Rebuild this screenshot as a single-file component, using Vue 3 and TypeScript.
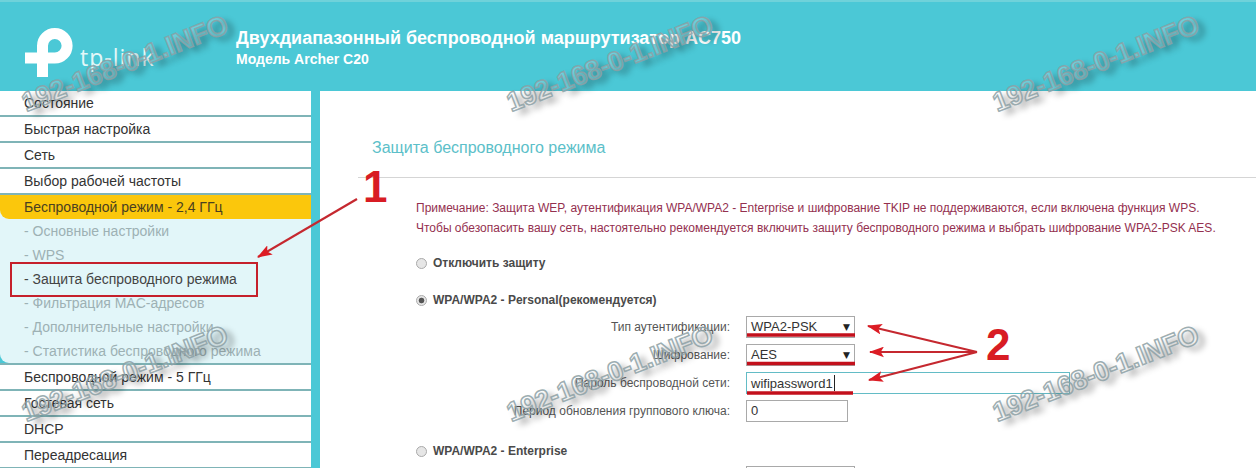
<script setup lang="ts">
interface MenuRow { label: string }
const topMenu: MenuRow[] = [
  { label: 'Состояние' },
  { label: 'Быстрая настройка' },
  { label: 'Сеть' },
  { label: 'Выбор рабочей частоты' },
]
const subMenu = [
  { label: '- Основные настройки', active: false },
  { label: '- WPS', active: false },
  { label: '- Защита беспроводного режима', active: true },
  { label: '- Фильтрация MAC-адресов', active: false },
  { label: '- Дополнительные настройки', active: false },
  { label: '- Статистика беспроводного режима', active: false },
]
const bottomMenu: MenuRow[] = [
  { label: 'Беспроводной режим - 5 ГГц' },
  { label: 'Гостевая сеть' },
  { label: 'DHCP' },
  { label: 'Переадресация' },
]
const marks = [
  { x: 125, y: 64 }, { x: 610, y: 64 }, { x: 1096, y: 64 },
  { x: 125, y: 374 }, { x: 610, y: 374 }, { x: 1096, y: 374 },
]
</script>

<template>
  <div class="page">
    <header class="header">
      <div class="logo">
        <svg width="56" height="56" viewBox="20 24 56 56">
          <path d="M42.5 77V45.75a12.3 12.3 0 1 1 12.3 12.3H25" fill="none" stroke="#fff" stroke-width="11" />
        </svg>
        <span class="logo-text">tp-link</span>
      </div>
      <div class="titles">
        <div class="title">Двухдиапазонный беспроводной маршрутизатор AC750</div>
        <div class="model">Модель Archer C20</div>
      </div>
    </header>

    <div class="body">
      <nav class="sidebar">
        <div v-for="r in topMenu" :key="r.label" class="row">{{ r.label }}</div>
        <div class="sub-wrap">
          <div class="row-active">Беспроводной режим - 2,4 ГГц</div>
          <div v-for="s in subMenu" :key="s.label" class="sub" :class="{ on: s.active }">{{ s.label }}</div>
        </div>
        <div v-for="r in bottomMenu" :key="r.label" class="row">{{ r.label }}</div>
      </nav>

      <main class="main">
        <h1 class="heading">Защита беспроводного режима</h1>
        <div class="content">
          <p class="note">Примечание: Защита WEP, аутентификация WPA/WPA2 - Enterprise и шифрование TKIP не поддерживаются, если включена функция WPS.</p>
          <p class="note">Чтобы обезопасить вашу сеть, настоятельно рекомендуется включить защиту беспроводного режима и выбрать шифрование WPA2-PSK AES.</p>

          <div class="radio-row first"><span class="radio"></span>Отключить защиту</div>
          <div class="radio-row second"><span class="radio checked"></span>WPA/WPA2 - Personal(рекомендуется)</div>

          <div class="form">
            <div class="field">
              <label>Тип аутентификации:</label>
              <div class="select">WPA2-PSK<span class="caret">▼</span></div>
            </div>
            <div class="field">
              <label>Шифрование:</label>
              <div class="select">AES<span class="caret">▼</span></div>
            </div>
            <div class="field">
              <label>Пароль беспроводной сети:</label>
              <div class="input wide">wifipassword1<span class="cursor"></span></div>
            </div>
            <div class="field">
              <label>Период обновления группового ключа:</label>
              <div class="input short">0</div>
            </div>
          </div>

          <div class="radio-row third"><span class="radio"></span>WPA/WPA2 - Enterprise</div>
          <div class="field last">
            <label></label>
            <div class="select"></div>
          </div>
        </div>
      </main>
    </div>

    <div
      v-for="(m, i) in marks"
      :key="i"
      class="mark"
      :style="{ left: m.x + 'px', top: m.y + 'px' }"
    >192-168-0-1.INFO</div>

    <svg class="notes" width="1256" height="468" viewBox="0 0 1256 468">
      <defs>
        <marker id="tip" viewBox="0 0 14 10" refX="13" refY="5" markerWidth="15" markerHeight="11" markerUnits="userSpaceOnUse" orient="auto">
          <path d="M0 0L14 5L0 10L3 5Z" fill="#dc1c24" />
        </marker>
      </defs>
      <rect x="11" y="263" width="246" height="33" fill="none" stroke="#c5202b" stroke-width="2" />
      <line x1="357" y1="199" x2="258" y2="257" stroke="#c5282f" stroke-width="2.2" marker-end="url(#tip)" />
      <line x1="977" y1="352" x2="868" y2="326" stroke="#c5282f" stroke-width="2.2" marker-end="url(#tip)" />
      <line x1="977" y1="352" x2="870" y2="352" stroke="#c5282f" stroke-width="2.2" marker-end="url(#tip)" />
      <line x1="977" y1="352" x2="869" y2="380" stroke="#c5282f" stroke-width="2.2" marker-end="url(#tip)" />
      <line x1="747" y1="335" x2="855" y2="335" stroke="#c3101c" stroke-width="3.5" />
      <line x1="747" y1="363.5" x2="855" y2="363.5" stroke="#c3101c" stroke-width="3.5" />
      <line x1="747" y1="393" x2="853" y2="393" stroke="#c3101c" stroke-width="3.5" />
      <text x="363" y="202" class="num">1</text>
      <text x="986" y="360" class="num">2</text>
    </svg>
  </div>
</template>

<style>
html, body { margin: 0; background: #fff; }
</style>

<style scoped>
.page {
  position: relative;
  width: 1256px;
  height: 468px;
  overflow: hidden;
  background: #4bc8d6;
  font-family: "Liberation Sans", Arial, sans-serif;
  color: #333;
}
.header {
  box-sizing: border-box;
  height: 91px;
  display: flex;
  border-top: 2px solid #6fd2da;
}
.logo {
  width: 236px;
  flex: none;
  display: flex;
  align-items: flex-start;
}
.logo svg {
  margin: 22px 0 0 20px;
  flex: none;
}
.logo-text {
  margin: 42px 0 0 4px;
  font-family: "Open Sans", sans-serif;
  font-size: 23px;
  line-height: 26px;
  letter-spacing: 1px;
  color: #e4f7f8;
}
.titles {
  padding-top: 26px;
  color: #fff;
  font-weight: 700;
}
.title {
  font-size: 18px;
  line-height: 20px;
}
.model {
  margin-top: 3px;
  font-size: 14px;
  line-height: 17px;
}
.body {
  display: flex;
  height: 377px;
}
.sidebar {
  width: 311px;
  flex: none;
  font-size: 14px;
}
.row {
  box-sizing: border-box;
  height: 26px;
  padding-left: 24px;
  line-height: 24px;
  background: #fff;
  border-bottom: 2px solid #7fb4b7;
}
.sub-wrap {
  border-bottom: 2px solid #7fb4b7;
  background: linear-gradient(#e2f6f9 0 50%, #4bc8d6 50%);
}
.row-active {
  box-sizing: border-box;
  height: 24px;
  padding-left: 24px;
  line-height: 24px;
  color: #4a4020;
  background: #fbc70c;
  border-bottom-left-radius: 9px;
}
.sub {
  height: 24px;
  line-height: 24px;
  padding-left: 24px;
  color: #9db1b4;
  background: #e2f6f9;
}
.sub.on { color: #444; }
.sub:last-child { border-bottom-left-radius: 9px; }
.main {
  flex: 1;
  margin-left: 9px;
  background: #fff;
  padding-top: 47px;
  min-width: 0;
}
.heading {
  margin: 0 0 0 52px;
  font-size: 16px;
  line-height: 20px;
  font-weight: 400;
  color: #5cbfc9;
}
.content {
  margin: 19px 0 0 38px;
  padding: 20px 0 0 58px;
  border-top: 1px solid #d5d5d5;
}
.note {
  margin: 0;
  font-size: 12px;
  line-height: 20px;
  color: #94304f;
  white-space: nowrap;
}
.radio-row {
  display: flex;
  align-items: center;
  height: 20px;
  font-size: 12px;
  font-weight: 700;
  color: #4a4a4a;
}
.radio-row.first { margin-top: 15px; }
.radio-row.second { margin-top: 17px; }
.radio-row.third { margin-top: 19px; }
.radio {
  box-sizing: border-box;
  width: 11px;
  height: 11px;
  margin-right: 6px;
  border: 1px solid #aaa;
  border-radius: 50%;
  background: #e6e6e6;
}
.radio.checked {
  background: radial-gradient(circle, #555 0 2.5px, #e6e6e6 3.2px);
}
.form {
  margin-top: 6px;
  display: flex;
  flex-direction: column;
  gap: 6px;
}
.field {
  display: flex;
  align-items: center;
  gap: 16px;
  margin-left: -58px;
}
.field label {
  width: 372px;
  text-align: right;
  font-size: 12px;
  color: #555;
  white-space: nowrap;
  flex: none;
}
.select, .input {
  box-sizing: border-box;
  height: 22px;
  line-height: 20px;
  padding-left: 4px;
  font-size: 13px;
  color: #333;
  border: 1px solid #a9a9a9;
  background: #fff;
}
.select {
  position: relative;
  width: 109px;
}
.caret {
  position: absolute;
  right: 4px;
  top: 0;
  font-size: 9px;
  color: #222;
  font-family: "DejaVu Sans", sans-serif;
}
.input.wide {
  width: 324px;
  border-color: #63bcc6;
  line-height: 22px;
}
.input.short { width: 102px; }
.cursor {
  display: inline-block;
  width: 1px;
  height: 16px;
  margin-left: 1px;
  vertical-align: -3px;
  background: #222;
}
.field.last { margin-top: 5px; }
.mark {
  position: absolute;
  transform: translate(-50%, -50%) rotate(-21.5deg);
  font-size: 27px;
  font-weight: 700;
  white-space: nowrap;
  color: rgba(255, 255, 255, 0.2);
  -webkit-text-stroke: 1.5px rgba(140, 160, 165, 0.85);
  text-shadow: 5px 6px 6px rgba(0, 0, 0, 0.35);
  pointer-events: none;
}
.notes {
  position: absolute;
  left: 0;
  top: 0;
  pointer-events: none;
}
.num {
  font-size: 44px;
  font-weight: 700;
  fill: #d81c24;
}
</style>
